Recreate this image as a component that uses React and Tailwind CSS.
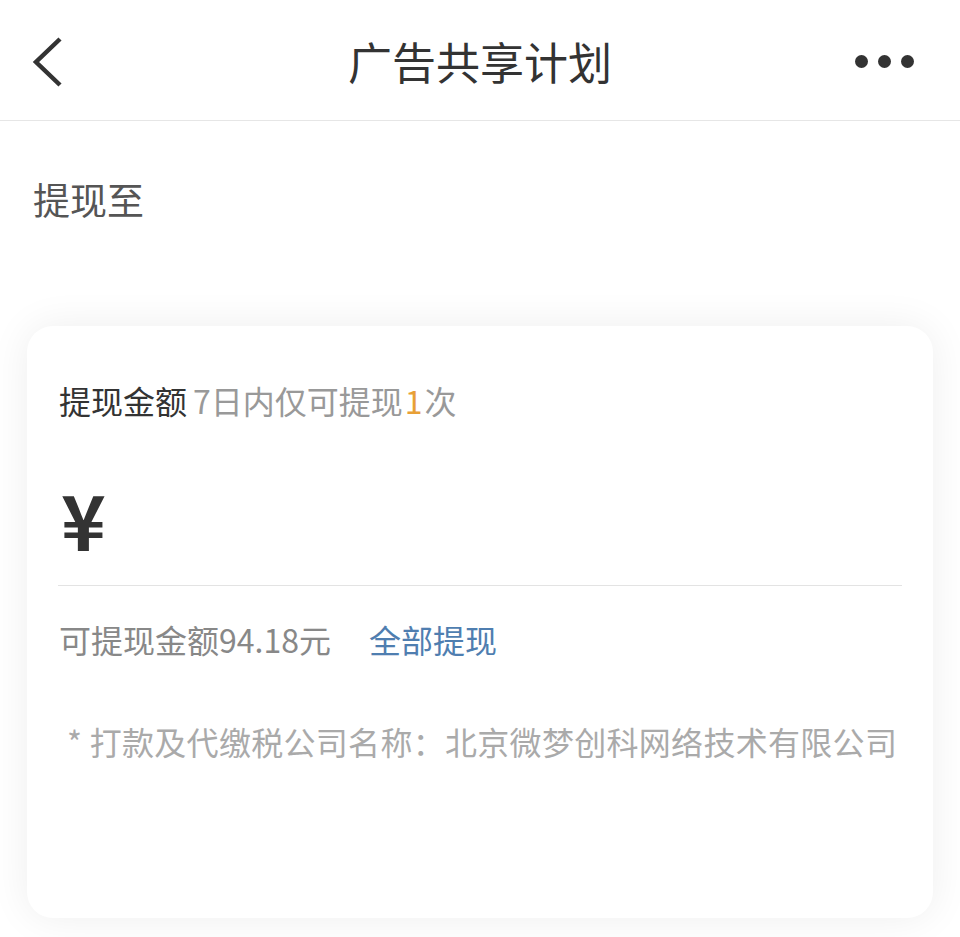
export default function App() {
  const font = { fontFamily: '"Noto Sans CJK SC", "Noto Sans", sans-serif' };
  return (
    <div className="w-[960px] h-[937px] bg-white overflow-hidden" style={font}>
      <div className="relative h-[121px] border-b border-[#e6e6e6] flex items-center justify-center">
        <svg className="absolute left-[30px] top-[36px]" width="36" height="52" viewBox="0 0 36 52">
          <path d="M30 3 L6 26 L30 49" fill="none" stroke="#333" strokeWidth="4.5" strokeLinecap="butt" strokeLinejoin="miter" />
        </svg>
        <div className="text-[44px] leading-none text-[#333] mt-[2px]">广告共享计划</div>
        <div className="absolute right-[46px] top-[55px] flex gap-[10px]">
          <div className="w-[13px] h-[13px] rounded-full bg-[#333]" />
          <div className="w-[13px] h-[13px] rounded-full bg-[#333]" />
          <div className="w-[13px] h-[13px] rounded-full bg-[#333]" />
        </div>
      </div>
      <div className="h-[205px] pl-[33px] pt-[60px]">
        <div className="text-[37px] leading-none text-[#555]">提现至</div>
      </div>
      <div className="mx-[27px] h-[592px] bg-white rounded-[26px] shadow-[0_0_40px_rgba(0,0,0,0.07)] px-[32px] pt-[57px]">
        <div className="text-[32px] leading-none h-[34px] flex items-center">
          <span className="text-[#333]">提现金额</span>
          <span className="text-[#999] ml-[6px]">7日内仅可提现</span>
          <span className="text-[#e8a036] mx-[2px]">1</span>
          <span className="text-[#999]">次</span>
        </div>
        <div className="h-[168px] flex items-center pl-[2px] pt-[34px]">
          <span className="text-[76px] font-bold leading-none text-[#333]">¥</span>
        </div>
        <div className="border-t border-[#e3e3e3] mx-[-1px]" />
        <div className="text-[32px] leading-none h-[34px] flex items-center mt-[36px]">
          <span className="text-[#888]">可提现金额94.18元</span>
          <span className="text-[#4f7eb0] ml-[38px]">全部提现</span>
        </div>
        <div className="text-[32px] leading-none h-[34px] flex items-center mt-[68px] pl-[8px] text-[#aaa] tracking-[0.3px]">
          * 打款及代缴税公司名称：北京微梦创科网络技术有限公司
        </div>
      </div>
    </div>
  );
}
